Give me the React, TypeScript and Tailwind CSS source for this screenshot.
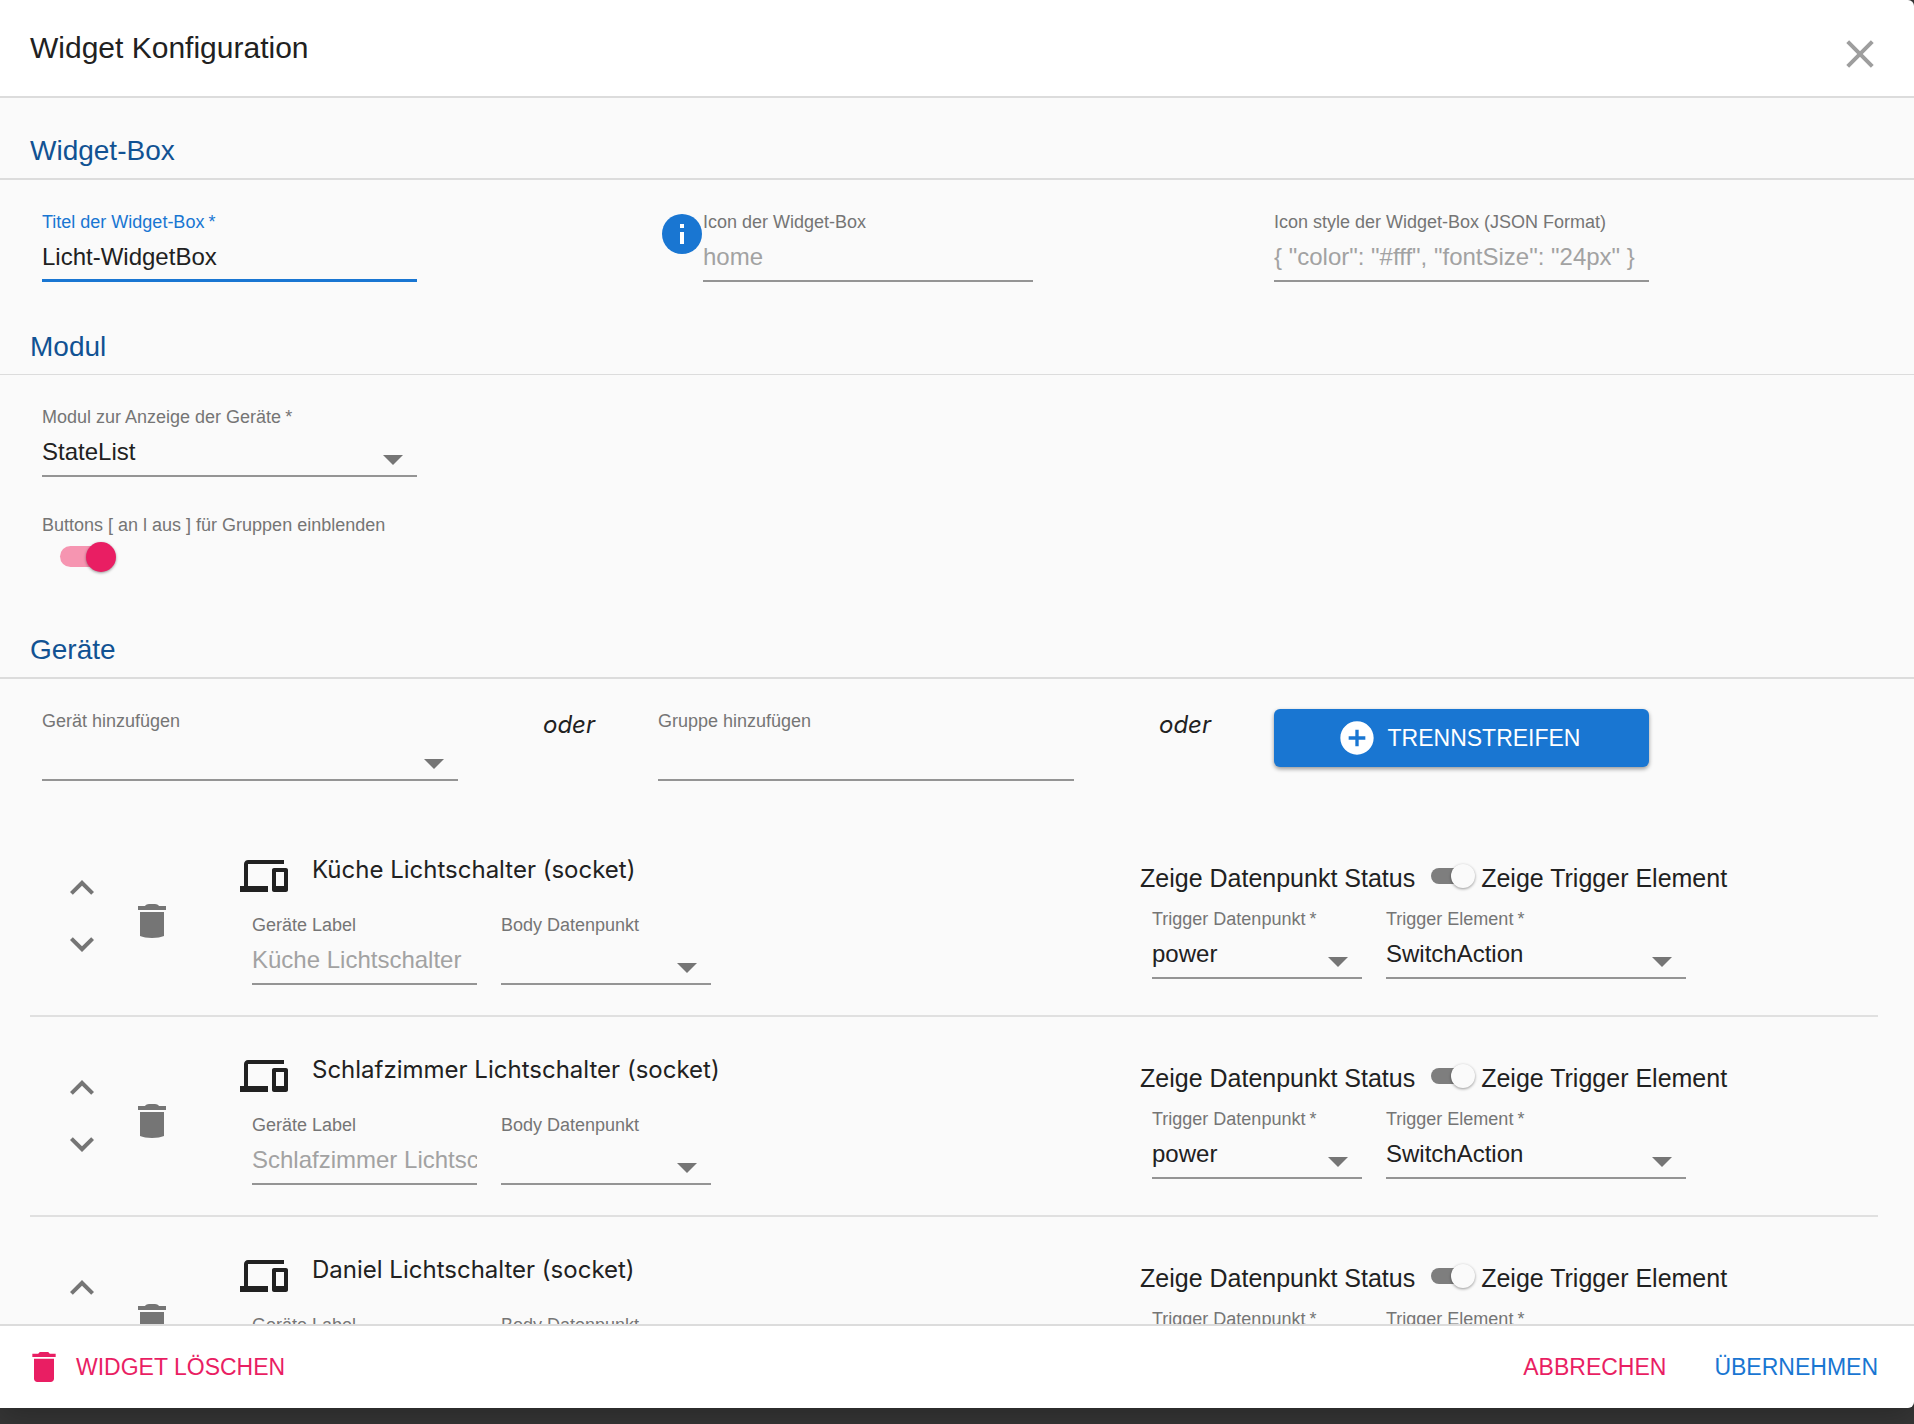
import { useId, useState } from "react";
import type { ReactNode } from "react";

const ICONS = {
  plus: "M12 2C6.48 2 2 6.48 2 12s4.48 10 10 10 10-4.48 10-10S17.52 2 12 2zm5 11h-4v4h-2v-4H7v-2h4V7h2v4h4v2z",
  devices:
    "M4 6h18V4H4c-1.1 0-2 .9-2 2v11H0v3h14v-3H4V6zm19 2h-6c-.55 0-1 .45-1 1v10c0 .55.45 1 1 1h6c.55 0 1-.45 1-1V9c0-.55-.45-1-1-1zm-1 9h-4v-7h4v7z",
  trash: "M6 19c0 1.1.9 2 2 2h8c1.1 0 2-.9 2-2V7H6v12zM19 4h-3.5l-1-1h-5l-1 1H5v2h14V4z",
  trashRow: "M6 7h12v12c-1.5.65-3.5 1-6 1s-4.5-.35-6-1V7zM5 4h3.4c.6-.6 1.2-1 2.1-1h3c.9 0 1.5.4 2.1 1H19v2H5V4z",
  up: "M12 8l-6 6 1.41 1.41L12 10.83l4.59 4.58L18 14z",
  down: "M16.59 8.59L12 13.17 7.41 8.59 6 10l6 6 6-6z",
  arrow: "M7 10l5 5 5-5z",
};

function Icon({ name, className }: { name: keyof typeof ICONS; className: string }) {
  return (
    <svg viewBox="0 0 24 24" fill="currentColor" aria-hidden="true" className={`shrink-0 ${className}`}>
      <path d={ICONS[name]} />
    </svg>
  );
}

type FieldProps = {
  label: string;
  required?: boolean;
  focused?: boolean;
  className: string;
  children: (id: string) => ReactNode;
};

function Field({ label, required, focused, className, children }: FieldProps) {
  const id = useId();
  return (
    <div
      className={`relative flex h-[70px] flex-col ${focused ? "border-b-3 border-[#1976d2]" : "border-b-2 border-[#949494]"} ${className}`}
    >
      <label
        htmlFor={id}
        className={`h-5 text-lg leading-5 whitespace-nowrap ${focused ? "text-[#1976d2]" : "text-[#757575]"}`}
      >
        {label}
        {required && <span className="ml-1">*</span>}
      </label>
      {children(id)}
    </div>
  );
}

type TextFieldProps = {
  label: string;
  value?: string;
  placeholder?: string;
  required?: boolean;
  focused?: boolean;
  className: string;
};

function TextField({ value = "", placeholder, ...rest }: TextFieldProps) {
  return (
    <Field {...rest}>
      {(id) => (
        <input
          id={id}
          type="text"
          defaultValue={value}
          placeholder={placeholder}
          className="w-full flex-1 bg-transparent pt-0.5 text-2xl text-[#212121] outline-none placeholder:text-[#a2a2a2]"
        />
      )}
    </Field>
  );
}

type SelectFieldProps = {
  label: string;
  options: string[];
  required?: boolean;
  className: string;
};

function SelectField({ options, ...rest }: SelectFieldProps) {
  return (
    <Field {...rest}>
      {(id) => (
        <>
          <select
            id={id}
            className="w-full flex-1 appearance-none bg-transparent pt-0.5 text-2xl text-[#212121] outline-none"
          >
            {options.map((o) => (
              <option key={o}>{o}</option>
            ))}
          </select>
          <Icon name="arrow" className="pointer-events-none absolute right-0 -bottom-2 size-12 text-[#757575]" />
        </>
      )}
    </Field>
  );
}

function SectionTitle({ children, thin }: { children: string; thin?: boolean }) {
  return (
    <h2
      className={`border-[#dcdcdc] pt-9 pr-9 pb-[10px] pl-[30px] text-[28px] leading-[34px] text-[#115293] ${thin ? "border-b" : "border-b-2"}`}
    >
      {children}
    </h2>
  );
}

function DeviceRow({ name }: { name: string }) {
  const [showTrigger, setShowTrigger] = useState(true);
  return (
    <li className="flex h-[200px] border-b-2 border-[#e0e0e0] pt-[35px]">
      <div className="flex w-[210px] shrink-0">
        <div className="flex flex-col gap-2 pt-3 pl-7 text-[#757575]">
          <button type="button" aria-label="Nach oben" className="size-12">
            <Icon name="up" className="size-12" />
          </button>
          <button type="button" aria-label="Nach unten" className="size-12">
            <Icon name="down" className="size-12" />
          </button>
        </div>
        <button type="button" aria-label="Gerät entfernen" className="mt-[46px] ml-[22px] size-12 text-[#757575]">
          <Icon name="trashRow" className="size-12" />
        </button>
      </div>

      <div className="w-[900px] shrink-0">
        <div className="flex gap-6">
          <Icon name="devices" className="size-12" />
          <h3 className="font-['Inter',sans-serif] text-2xl leading-9">{name} (socket)</h3>
        </div>
        <div className="mt-[15px] ml-3 flex gap-6">
          <TextField label="Geräte Label" placeholder={name} className="w-[225px]" />
          <SelectField label="Body Datenpunkt" options={[""]} className="w-[210px]" />
        </div>
      </div>

      <div className="pt-2">
        <label className="flex h-9 items-center text-[25px] leading-9 whitespace-nowrap">
          Zeige Datenpunkt Status
          <span className="relative mr-1.5 mb-1 ml-4 block h-6 w-11">
            <input
              type="checkbox"
              role="switch"
              checked={showTrigger}
              onChange={(e) => setShowTrigger(e.target.checked)}
              className="peer sr-only"
            />
            <span className="absolute top-1 left-0 h-4 w-9 rounded-full bg-[#7e7e7e]" />
            <span className="absolute top-0 left-0 size-6 rounded-full bg-[#fafafa] shadow-[0_1px_3px_rgba(0,0,0,0.4)] peer-checked:left-5" />
          </span>
          Zeige Trigger Element
        </label>
        <div className="mt-[13px] ml-3 flex gap-6">
          <SelectField label="Trigger Datenpunkt" required options={["power"]} className="w-[210px]" />
          <SelectField label="Trigger Element" required options={["SwitchAction"]} className="w-[300px]" />
        </div>
      </div>
    </li>
  );
}

const DEVICES = ["Küche Lichtschalter", "Schlafzimmer Lichtschalter", "Daniel Lichtschalter"];

export default function App() {
  return (
    <div className="h-screen bg-[#363636] pb-4 font-['Liberation_Sans',Arial,sans-serif] text-[#212121]">
      <div
        role="dialog"
        aria-labelledby="dialog-title"
        className="flex h-full flex-col overflow-hidden rounded-r-md bg-white shadow-[0_8px_30px_rgba(0,0,0,0.25)]"
      >
        <header className="flex shrink-0 items-start justify-between border-b-2 border-[#dcdcdc] px-[30px] pb-[18px]">
          <h1 id="dialog-title" className="pt-[30px] text-[30px] leading-9">
            Widget Konfiguration
          </h1>
          <button type="button" aria-label="Schließen" className="mt-[30px] size-12 text-[#9e9e9e]">
            <svg viewBox="0 0 48 48" fill="none" stroke="currentColor" strokeWidth="4" className="size-12">
              <path d="M11.7 11.7L36.3 36.3M36.3 11.7L11.7 36.3" />
            </svg>
          </button>
        </header>

        <main className="min-h-0 flex-1 overflow-y-auto bg-[#fafafa] [scrollbar-width:none]">
          <section>
            <SectionTitle>Widget-Box</SectionTitle>
            <div className="grid grid-cols-3 pt-8 pr-9 pb-3 pl-[30px]">
              <TextField
                label="Titel der Widget-Box"
                value="Licht-WidgetBox"
                required
                focused
                className="ml-3 w-[375px]"
              />
              <div className="flex gap-px pl-4">
                <svg viewBox="0 0 40 40" aria-hidden="true" className="mt-0.5 size-10 shrink-0">
                  <circle cx="20" cy="20" r="20" fill="#1976d2" />
                  <path d="M18 10h4v4h-4zM18 18h4v12h-4z" fill="#fff" />
                </svg>
                <TextField label="Icon der Widget-Box" placeholder="home" className="w-[330px]" />
              </div>
              <TextField
                label="Icon style der Widget-Box (JSON Format)"
                placeholder={'{ "color": "#fff", "fontSize": "24px" }'}
                className="ml-3 w-[375px]"
              />
            </div>
          </section>

          <section>
            <SectionTitle thin>Modul</SectionTitle>
            <div className="flex flex-col items-start pt-8 pb-[25px] pl-[42px]">
              <SelectField
                label="Modul zur Anzeige der Geräte"
                required
                options={["StateList"]}
                className="w-[375px]"
              />
              <label className="mt-[38px] text-lg leading-5 text-[#757575]">
                Buttons [ an l aus ] für Gruppen einblenden
                <span className="relative mt-[7px] ml-[18px] block h-[30px] w-14">
                  <input type="checkbox" role="switch" defaultChecked className="peer sr-only" />
                  <span className="absolute top-1 left-0 h-[21px] w-[51px] rounded-full bg-[#f695b1]" />
                  <span className="absolute top-0 left-0 size-[30px] rounded-full bg-[#e91e63] shadow-[0_1px_3px_rgba(0,0,0,0.4)] peer-checked:left-[26px]" />
                </span>
              </label>
            </div>
          </section>

          <section>
            <SectionTitle>Geräte</SectionTitle>
            <div className="grid grid-cols-3 items-start pt-[30px] pr-9 pl-[30px]">
              <div className="flex pt-0.5 pl-3">
                <SelectField label="Gerät hinzufügen" options={[""]} className="w-[416px]" />
                <em className="ml-[85px] font-['Inter',sans-serif] text-2xl leading-7">oder</em>
              </div>
              <div className="flex pt-0.5 pl-3">
                <TextField label="Gruppe hinzufügen" className="w-[416px]" />
                <em className="ml-[85px] font-['Inter',sans-serif] text-2xl leading-7">oder</em>
              </div>
              <button
                type="button"
                className="ml-3 flex h-[58px] w-[375px] items-center justify-center gap-[11px] rounded-md bg-[#1976d2] pr-1.5 text-[23px] text-white shadow-[0_2px_4px_rgba(0,0,0,0.4)]"
              >
                <Icon name="plus" className="size-10" />
                TRENNSTREIFEN
              </button>
            </div>
            <ul className="mt-9 mr-9 ml-[30px]">
              {DEVICES.map((name) => (
                <DeviceRow key={name} name={name} />
              ))}
            </ul>
          </section>
        </main>

        <footer className="flex h-[84px] shrink-0 items-center justify-between border-t-2 border-[#dcdcdc] pr-9 pl-6 text-[23px]">
          <button type="button" className="flex items-center gap-3 text-[#e91e63]">
            <Icon name="trash" className="size-10" />
            WIDGET LÖSCHEN
          </button>
          <div className="flex gap-12">
            <button type="button" className="text-[#e91e63]">
              ABBRECHEN
            </button>
            <button type="button" className="text-[#1976d2]">
              ÜBERNEHMEN
            </button>
          </div>
        </footer>
      </div>
    </div>
  );
}
